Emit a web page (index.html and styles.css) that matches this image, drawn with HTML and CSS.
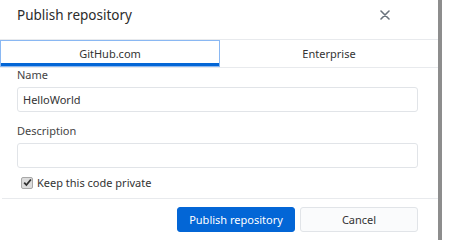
FILE: index.html
```html
<!DOCTYPE html>
<html lang="en">
<head>
    <meta charset="UTF-8">
    <meta name="viewport" content="width=device-width, initial-scale=1.0">
    <title>Publish repository</title>
    <link rel="stylesheet" href="styles.css">
</head>
<body>
    <div class="screen">
        <div class="dialog">
            <div class="dialog-header">
                <h1>Publish repository</h1>
                <svg class="close" width="10" height="10" viewBox="0 0 10 10">
                    <path d="M1 1L9 9M9 1L1 9" stroke="#6a737d" stroke-width="1.6" stroke-linecap="round"/>
                </svg>
            </div>

            <div class="tabs">
                <div class="tab selected">GitHub.com</div>
                <div class="tab">Enterprise</div>
            </div>

            <form class="dialog-body">
                <div class="form-group">
                    <label for="name">Name</label>
                    <input type="text" id="name" value="HelloWorld">
                </div>
                <div class="form-group">
                    <label for="description">Description</label>
                    <input type="text" id="description">
                </div>
                <div class="check-row">
                    <span class="checkbox">
                        <svg width="9" height="9" viewBox="0 0 9 9">
                            <path d="M1.2 4.6L3.4 7L7.9 1.5" fill="none" stroke="#2f2f2f" stroke-width="1.8"/>
                        </svg>
                    </span>
                    <span>Keep this code private</span>
                </div>
            </form>

            <div class="dialog-footer">
                <button class="btn btn-primary">Publish repository</button>
                <button class="btn">Cancel</button>
            </div>
        </div>
        <div class="scrollbar"></div>
    </div>
</body>
</html>
```

FILE: styles.css
```css
* {
    margin: 0;
    padding: 0;
    box-sizing: border-box;
    font-family: "Noto Sans", "Open Sans", sans-serif;
}
body {
    background-color: white;
    width: 457px;
    height: 240px;
    overflow: hidden;
}
.screen {
    display: flex;
    height: 240px;
}
.dialog {
    width: 438px;
    background-color: white;
}
.scrollbar {
    width: 4px;
    background-color: #8d8d8d;
}
.dialog-header {
    height: 40px;
    display: flex;
    align-items: center;
    justify-content: space-between;
    padding: 0 48px 9px 17px;
    border-bottom: 1px solid #e8eaed;
}
h1 {
    font-size: 13.5px;
    font-weight: normal;
    color: #2b2b2b;
}
.tabs {
    display: flex;
    height: 28px;
    border-bottom: 1px solid #e8eaed;
}
.tab {
    flex: 1;
    display: flex;
    align-items: center;
    justify-content: center;
    font-size: 11px;
    color: #333;
    padding-bottom: 1px;
}
.tab.selected {
    border: 1px solid #8ab8f3;
    box-shadow: inset 0 -3px 0 #0366d6;
}
.dialog-body {
    padding: 0 20px 0 17px;
}
.form-group {
    margin-bottom: 5px;
}
label {
    display: block;
    height: 19px;
    font-size: 11px;
    line-height: 13px;
    color: #444;
}
.form-group + .form-group label {
    height: 26px;
    line-height: 28px;
}
input[type="text"] {
    width: 100%;
    height: 25px;
    padding: 0 5px;
    border: 1px solid #e1e4e8;
    border-radius: 3px;
    font-size: 11px;
    color: #333;
    outline: none;
}
.check-row {
    display: flex;
    align-items: center;
    gap: 4px;
    height: 16px;
    padding: 3px 0 0 4px;
    font-size: 11px;
    color: #333;
}
.checkbox {
    width: 12px;
    height: 12px;
    display: flex;
    align-items: center;
    justify-content: center;
    background-color: #dcdcdc;
    border: 1px solid #a8a8a8;
    border-radius: 2px;
}
.dialog-footer {
    margin-top: 9px;
    margin-left: 2px;
    border-top: 1px solid #e8eaed;
    display: flex;
    justify-content: flex-end;
    gap: 5px;
    padding: 8px 20px 0 0;
}
.btn {
    width: 118px;
    height: 25px;
    border: 1px solid #e1e4e8;
    border-radius: 3px;
    background-color: #fafbfc;
    color: #333;
    font-size: 11px;
    font-family: "Noto Sans", sans-serif;
}
.btn-primary {
    background-color: #0366d6;
    border-color: #0366d6;
    color: white;
}
```
